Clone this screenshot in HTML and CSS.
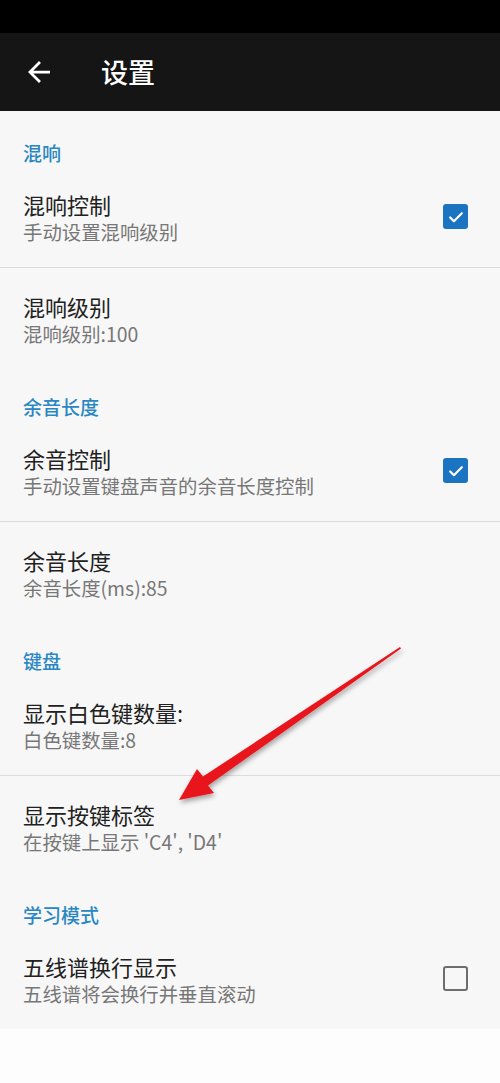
FILE: index.html
```html
<!DOCTYPE html>
<html lang="zh-CN">
<head>
<meta charset="utf-8">
<title>设置</title>
<link rel="stylesheet" href="styles.css">
</head>
<body>
<div class="statusbar"></div>
<header class="toolbar">
  <svg class="back" viewBox="4 4 16 16" width="22" height="22"><path d="M20 11H7.83l5.59-5.59L12 4l-8 8 8 8 1.41-1.41L7.83 13H20v-2z" fill="#fff"/></svg>
  <h1 class="title">设置</h1>
</header>
<main class="list">
  <div class="section">混响</div>
  <div class="item">
    <div class="text"><div class="t">混响控制</div><div class="s">手动设置混响级别</div></div>
    <span class="cb on"><svg viewBox="0 0 24 24" width="20" height="20"><path d="M5 12.5l4.5 4.5L19 7.5" fill="none" stroke="#fff" stroke-width="2.6" stroke-linecap="round" stroke-linejoin="round"/></svg></span>
  </div>
  <div class="divider"></div>
  <div class="item">
    <div class="text"><div class="t">混响级别</div><div class="s">混响级别:100</div></div>
  </div>
  <div class="section">余音长度</div>
  <div class="item">
    <div class="text"><div class="t">余音控制</div><div class="s">手动设置键盘声音的余音长度控制</div></div>
    <span class="cb on"><svg viewBox="0 0 24 24" width="20" height="20"><path d="M5 12.5l4.5 4.5L19 7.5" fill="none" stroke="#fff" stroke-width="2.6" stroke-linecap="round" stroke-linejoin="round"/></svg></span>
  </div>
  <div class="divider"></div>
  <div class="item">
    <div class="text"><div class="t">余音长度</div><div class="s">余音长度(ms):85</div></div>
  </div>
  <div class="section">键盘</div>
  <div class="item">
    <div class="text"><div class="t">显示白色键数量:</div><div class="s">白色键数量:8</div></div>
  </div>
  <div class="divider"></div>
  <div class="item">
    <div class="text"><div class="t">显示按键标签</div><div class="s">在按键上显示 'C4', 'D4'</div></div>
  </div>
  <div class="section">学习模式</div>
  <div class="item">
    <div class="text"><div class="t">五线谱换行显示</div><div class="s">五线谱将会换行并垂直滚动</div></div>
    <span class="cb off"></span>
  </div>
</main>
<svg class="redarrow" viewBox="0 0 500 1083" width="500" height="1083">
  <defs>
    <filter id="sh" x="-20%" y="-20%" width="140%" height="140%">
      <feDropShadow dx="1" dy="3" stdDeviation="2.5" flood-color="#000" flood-opacity="0.35"/>
    </filter>
  </defs>
  <polygon filter="url(#sh)" fill="#e8151c" points="179,800 197,769 203,776.5 400,647 401,648.5 208,785.5 214,793"/>
</svg>
</body>
</html>
```

FILE: styles.css
```css
* { box-sizing: border-box; }
html, body { margin: 0; padding: 0; }
body {
  width: 500px;
  min-height: 1083px;
  background: #fdfdfd;
  font-family: "Noto Sans CJK SC", "Noto Sans", Roboto, sans-serif;
  position: relative;
  overflow: hidden;
}
.statusbar { height: 33px; background: #000; }
.toolbar {
  height: 78px;
  background: #151515;
  display: flex;
  align-items: center;
  padding-left: 28px;
}
.back { display: block; }
.title {
  margin: 0 0 0 51px;
  color: #fff;
  font-size: 27px;
  font-weight: 500;
  line-height: 34px;
}
.list {
  background: #f7f7f7;
  padding-top: 4px;
}
.section {
  height: 51px;
  padding: 26px 23px 0;
  font-size: 19px;
  line-height: 24px;
  color: #2a87c3;
  font-weight: 500;
}
.item {
  height: 101px;
  display: flex;
  align-items: center;
  padding: 0 32px 0 23px;
}
.text { flex: 1; padding-top: 2px; }
.t {
  font-size: 22px;
  line-height: 28px;
  color: #212121;
}
.s {
  font-size: 19.4px;
  line-height: 28px;
  color: #777;
}
.divider { height: 1px; background: #dcdcdc; }
.cb {
  width: 25px;
  height: 25px;
  border-radius: 3px;
  display: flex;
  align-items: center;
  justify-content: center;
}
.cb.on { background: #1a74c1; }
.cb.off { border: 2.5px solid #6d6d6d; border-radius: 3px; }
.redarrow { position: absolute; left: 0; top: 0; pointer-events: none; }
```
